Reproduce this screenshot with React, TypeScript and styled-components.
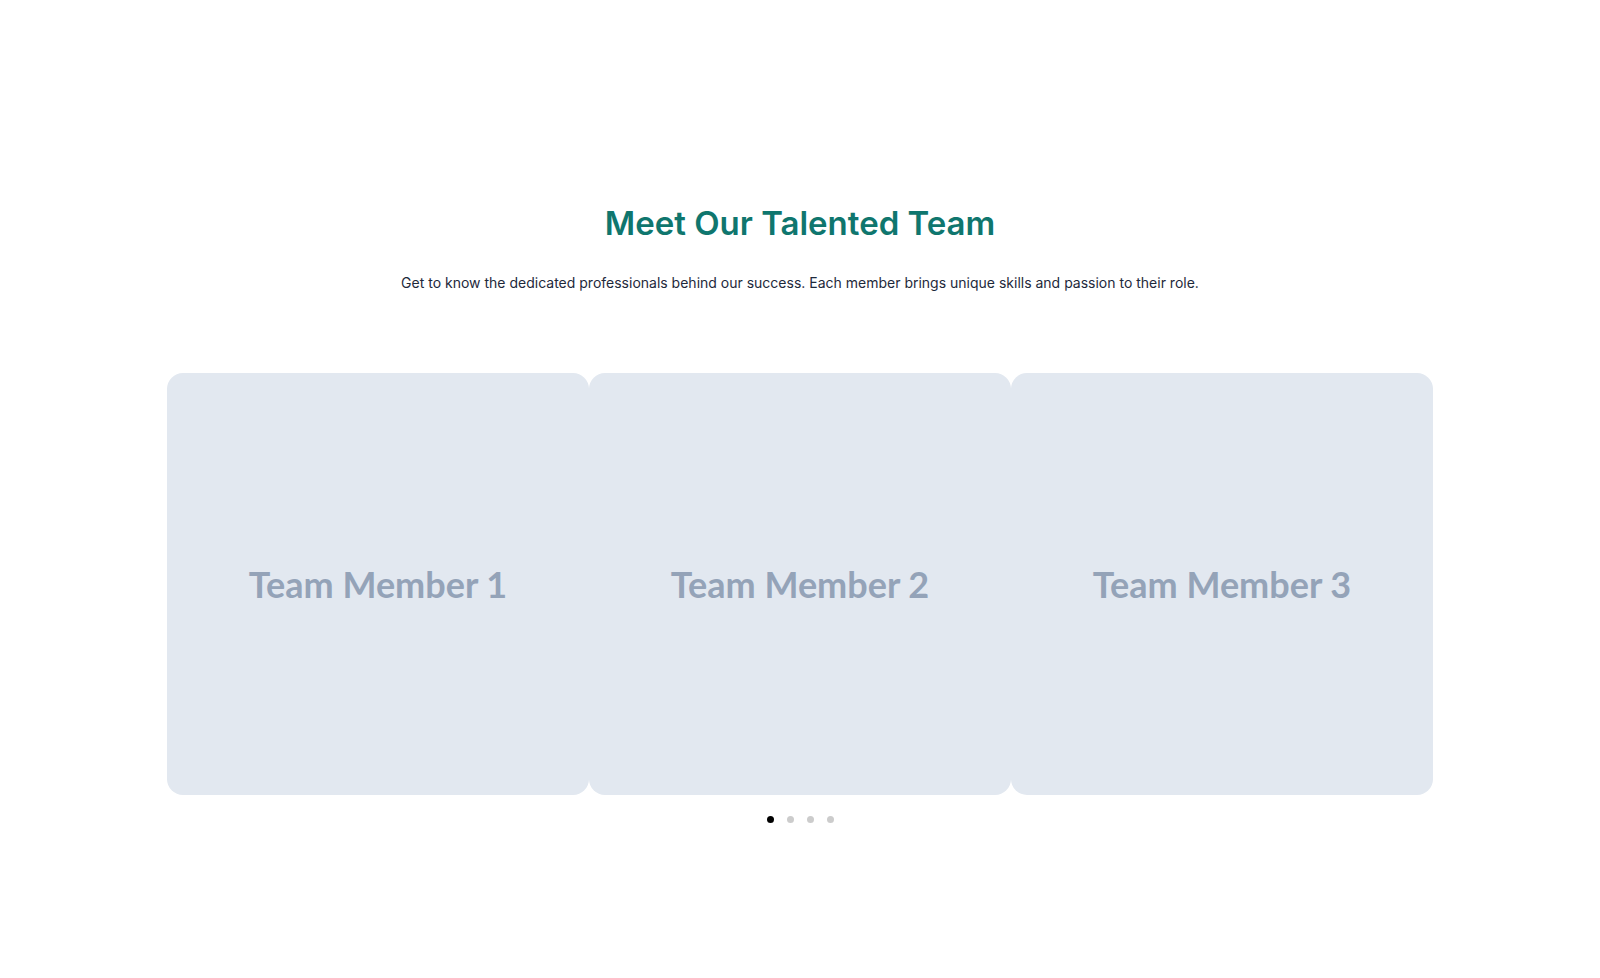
import * as React from 'react';
import styled, { createGlobalStyle } from 'styled-components';

const GlobalStyle = createGlobalStyle`
  body {
    margin: 0;
    background: #ffffff;
    font-family: Inter, "Noto Sans", sans-serif;
  }
`;

const Section = styled.section`
  padding: 201px 0 0;
  display: flex;
  flex-direction: column;
  align-items: center;
`;

const Title = styled.h2`
  margin: 0;
  font-family: Inter, sans-serif;
  font-weight: 600;
  font-size: 33px;
  line-height: 44px;
  color: #0f766e;
`;

const Subtitle = styled.p`
  margin: 27px 0 0;
  font-family: Inter, sans-serif;
  font-size: 14px;
  line-height: 22px;
  color: #1e293b;
`;

const Track = styled.div`
  margin-top: 79px;
  width: 1266px;
  display: grid;
  grid-template-columns: repeat(3, 1fr);
`;

const Card = styled.div`
  height: 422px;
  border-radius: 16px;
  background: #e2e8f0;
  display: flex;
  align-items: center;
  justify-content: center;
`;

const CardLabel = styled.span`
  font-family: Lato, sans-serif;
  font-weight: 700;
  font-size: 36px;
  color: #94a3b8;
`;

const Dots = styled.div`
  margin-top: 21px;
  display: flex;
  gap: 13px;
`;

const Dot = styled.span<{ active: boolean }>`
  width: 7px;
  height: 7px;
  border-radius: 50%;
  background: ${(props) => (props.active ? '#000000' : '#cccccc')};
`;

export default function App() {
  const members = [1, 2, 3];
  return (
    <>
      <GlobalStyle />
      <Section>
        <Title>Meet Our Talented Team</Title>
        <Subtitle>
          Get to know the dedicated professionals behind our success. Each member brings unique skills and passion to their role.
        </Subtitle>
        <Track>
          {members.map((n) => (
            <Card key={n}>
              <CardLabel>Team Member {n}</CardLabel>
            </Card>
          ))}
        </Track>
        <Dots>
          {[0, 1, 2, 3].map((i) => (
            <Dot key={i} active={i === 0} />
          ))}
        </Dots>
      </Section>
    </>
  );
}
